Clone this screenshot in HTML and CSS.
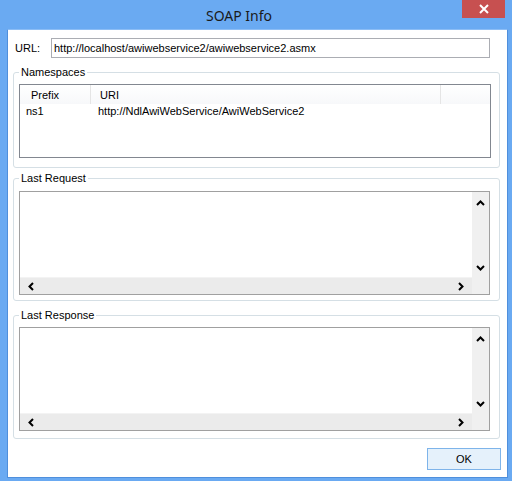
FILE: index.html
```html
<!DOCTYPE html>
<html>
<head>
<meta charset="utf-8">
<link rel="stylesheet" href="styles.css">
</head>
<body>
<div class="window">
  <div class="titlebar">
    <div class="title">SOAP Info</div>
    <div class="close">
      <svg width="10" height="10" viewBox="0 0 10 10"><path d="M1 1L9 9M9 1L1 9" stroke="#fff" stroke-width="2"/></svg>
    </div>
  </div>
  <div class="client">
    <div class="url-row">
      <label class="url-label">URL:</label>
      <div class="url-box">http://localhost/awiwebservice2/awiwebservice2.asmx</div>
    </div>

    <fieldset class="group group-ns">
      <legend>Namespaces</legend>
      <div class="listview">
        <div class="lv-header">
          <div class="lv-col c1">Prefix</div>
          <div class="lv-col c2">URI</div>
          <div class="lv-col c3"></div>
        </div>
        <div class="lv-row">
          <div class="lv-cell c1">ns1</div>
          <div class="lv-cell c2">http://NdlAwiWebService/AwiWebService2</div>
        </div>
      </div>
    </fieldset>

    <fieldset class="group group-req">
      <legend>Last Request</legend>
      <div class="memo">
        <div class="memo-text"></div>
        <div class="vscroll">
          <svg class="arr" width="9" height="6" viewBox="0 0 9 6"><path d="M1 5L4.5 1.5L8 5" fill="none" stroke="#000" stroke-width="2"/></svg>
          <svg class="arr" width="9" height="6" viewBox="0 0 9 6"><path d="M1 1L4.5 4.5L8 1" fill="none" stroke="#000" stroke-width="2"/></svg>
        </div>
        <div class="hscroll">
          <svg class="arr" width="6" height="9" viewBox="0 0 6 9"><path d="M5 1L1.5 4.5L5 8" fill="none" stroke="#000" stroke-width="2"/></svg>
          <svg class="arr" width="6" height="9" viewBox="0 0 6 9"><path d="M1 1L4.5 4.5L1 8" fill="none" stroke="#000" stroke-width="2"/></svg>
        </div>
        <div class="corner"></div>
      </div>
    </fieldset>

    <fieldset class="group group-resp">
      <legend>Last Response</legend>
      <div class="memo">
        <div class="memo-text"></div>
        <div class="vscroll">
          <svg class="arr" width="9" height="6" viewBox="0 0 9 6"><path d="M1 5L4.5 1.5L8 5" fill="none" stroke="#000" stroke-width="2"/></svg>
          <svg class="arr" width="9" height="6" viewBox="0 0 9 6"><path d="M1 1L4.5 4.5L8 1" fill="none" stroke="#000" stroke-width="2"/></svg>
        </div>
        <div class="hscroll">
          <svg class="arr" width="6" height="9" viewBox="0 0 6 9"><path d="M5 1L1.5 4.5L5 8" fill="none" stroke="#000" stroke-width="2"/></svg>
          <svg class="arr" width="6" height="9" viewBox="0 0 6 9"><path d="M1 1L4.5 4.5L1 8" fill="none" stroke="#000" stroke-width="2"/></svg>
        </div>
        <div class="corner"></div>
      </div>
    </fieldset>

    <div class="button-row">
      <button class="ok-btn">OK</button>
    </div>
  </div>
</div>
</body>
</html>
```

FILE: styles.css
```css
* { box-sizing: border-box; }
html, body { margin: 0; padding: 0; }
body {
  width: 512px;
  height: 481px;
  overflow: hidden;
  background: #6aaaf2;
  font-family: "Liberation Sans", Arial, sans-serif;
  font-size: 11px;
  color: #000;
}
.window {
  width: 512px;
  height: 481px;
  display: flex;
  flex-direction: column;
}
.titlebar {
  height: 29px;
  display: flex;
  align-items: flex-start;
  flex: none;
}
.title {
  flex: 1;
  text-align: center;
  padding-left: 16px;
  font-family: "Noto Sans", "Open Sans", sans-serif;
  font-size: 14px;
  line-height: 32px;
  color: #1a1a1a;
}
.close {
  width: 43px;
  height: 18px;
  margin-right: 7px;
  background: #c75050;
  display: flex;
  align-items: center;
  justify-content: center;
}
.close svg { display: block; }
.client {
  flex: 1;
  margin: 0 4px 3px 7px;
  border: 1px solid #4f8fdc;
  border-top: 1px solid #8cbdf5;
  background: #fff;
  display: flex;
  flex-direction: column;
}
.url-row {
  display: flex;
  align-items: center;
  padding: 8px 0 0 7px;
}
.url-label {
  width: 36px;
}
.url-box {
  width: 439px;
  height: 20px;
  border: 1px solid #abadb3;
  padding: 0 2px;
  line-height: 18px;
  white-space: nowrap;
}
.group {
  margin: 8px 7px 0 5px;
  padding: 5px 8px 9px 5px;
  border: 1px solid #d5dfe5;
  border-radius: 3px;
  min-width: 0;
}
.group legend {
  padding: 0 2px;
  line-height: 13px;
  color: #000;
}
.group-req { margin-top: 4px; padding-top: 6px; padding-bottom: 5px; padding-right: 9px; }
.group-resp { margin-top: 8px; padding-top: 5px; padding-bottom: 7px; padding-right: 9px; }

.listview {
  height: 74px;
  border: 1px solid #828790;
  background: #fff;
}
.lv-header {
  display: flex;
  height: 19px;
  background: linear-gradient(#ffffff, #f7f8fa);
}
.lv-col {
  line-height: 20px;
  border-right: 1px solid #e5e5e5;
  color: #000;
}
.lv-header .c1 { width: 71px; padding-left: 11px; }
.lv-header .c2 { width: 350px; padding-left: 9px; }
.lv-header .c3 { flex: 1; border-right: none; }
.lv-row {
  display: flex;
  height: 14px;
  line-height: 14px;
}
.lv-cell.c1 { width: 71px; padding-left: 6px; }
.lv-cell.c2 { padding-left: 7px; }

.memo {
  height: 104px;
  border: 1px solid #a0a0a0;
  display: grid;
  grid-template-columns: 1fr 17px;
  grid-template-rows: 1fr 17px;
  background: #fff;
}
.memo-text { background: #fff; }
.vscroll {
  background: #f0f0f0;
  display: flex;
  flex-direction: column;
  justify-content: space-between;
  align-items: center;
  padding: 8px 0 6px 0;
}
.hscroll {
  background: #ebebeb;
  border-top: 1px solid #f3f3f3;
  display: flex;
  justify-content: space-between;
  align-items: center;
  padding: 0 8px 0 8px;
}
.corner { background: #f0f0f0; }
.arr { display: block; }

.button-row {
  display: flex;
  justify-content: flex-end;
  padding: 9px 6px 0 0;
}
.ok-btn {
  width: 74px;
  height: 22px;
  border: 1px solid #7eb4ea;
  background: #e5f1fb;
  font-family: "Liberation Sans", Arial, sans-serif;
  font-size: 11px;
  color: #000;
  padding: 0;
  border-radius: 0;
}
```
